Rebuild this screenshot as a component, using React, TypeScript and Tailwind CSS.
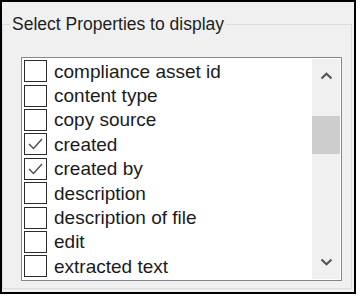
const items: { label: string; checked: boolean }[] = [
  { label: "compliance asset id", checked: false },
  { label: "content type", checked: false },
  { label: "copy source", checked: false },
  { label: "created", checked: true },
  { label: "created by", checked: true },
  { label: "description", checked: false },
  { label: "description of file", checked: false },
  { label: "edit", checked: false },
  { label: "extracted text", checked: false },
];

const CheckBox = ({ checked }: { checked: boolean }) => (
  <div className="h-[22px] w-[23px] shrink-0 border border-[#2b2b2b] bg-white">
    {checked && (
      <svg width="21" height="20" viewBox="0 0 21 20" className="block">
        <polyline
          points="4,10 8.5,14.5 17,5"
          fill="none"
          stroke="#4a4a4a"
          strokeWidth="1.4"
        />
      </svg>
    )}
  </div>
);

const Chevron = ({ up }: { up?: boolean }) => (
  <svg width="13" height="8" viewBox="0 0 13 8" className="block">
    <polyline
      points={up ? "1.5,6.5 6.5,1.8 11.5,6.5" : "1.5,1.5 6.5,6.2 11.5,1.5"}
      fill="none"
      stroke="#555555"
      strokeWidth="2.2"
    />
  </svg>
);

export default function App() {
  return (
    <div className="h-[298px] w-[360px] bg-white" style={{ fontFamily: '"Liberation Sans", Arial, sans-serif' }}>
      <div className="h-[294px] w-[356px] border-2 border-black bg-[#f0f0f0]">
        <fieldset className="mx-0 mt-[11px] h-[276px] w-[350px] border border-[#dcdcdc] p-0">
          <legend className="ml-[7px] h-[22px] px-[2px] text-[17.5px] leading-[22px] text-[#1e1e1e]">
            Select Properties to display
          </legend>
          <div className="ml-[18px] mt-[22px] flex h-[224px] w-[321px] border border-[#828790] bg-white p-[1px]">
            <div className="flex flex-1 flex-col">
              {items.map((item) => (
                <div key={item.label} className="flex h-[24.4px] items-center gap-[7px] pl-[1px]">
                  <CheckBox checked={item.checked} />
                  <span className="whitespace-nowrap text-[19px] leading-none text-[#1b1b1b]">{item.label}</span>
                </div>
              ))}
            </div>
            <div className="flex w-[28px] flex-col bg-[#f0f0f0]">
              <div className="flex h-[34px] items-center justify-center">
                <Chevron up />
              </div>
              <div className="flex-1 pt-[23px]">
                <div className="h-[38px] bg-[#cdcdcd]" />
              </div>
              <div className="flex h-[34px] items-center justify-center">
                <Chevron />
              </div>
            </div>
          </div>
        </fieldset>
      </div>
    </div>
  );
}
